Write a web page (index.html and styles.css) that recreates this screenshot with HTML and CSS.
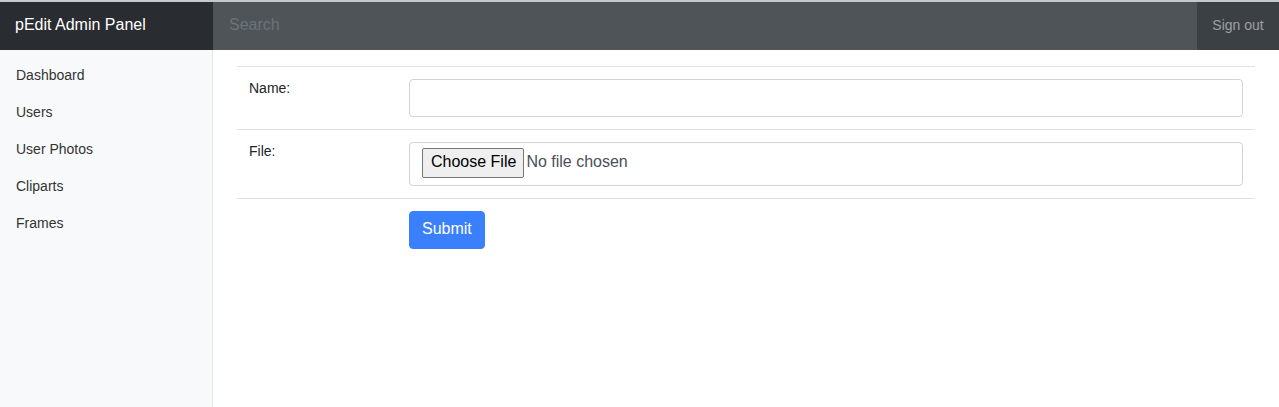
FILE: index.html
```html
<!DOCTYPE html>
<html>
<head>
<meta charset="utf-8">
<title>pEdit Admin Panel</title>
<link rel="stylesheet" href="styles.css">
</head>
<body>
<div class="topline"></div>
<nav class="navbar">
  <a class="brand" href="#">pEdit Admin Panel</a>
  <input class="search" type="text" placeholder="Search">
  <a class="signout" href="#">Sign out</a>
</nav>
<div class="layout">
  <aside class="sidebar">
    <ul class="nav">
      <li><a href="#">Dashboard</a></li>
      <li><a href="#">Users</a></li>
      <li><a href="#">User Photos</a></li>
      <li><a href="#">Cliparts</a></li>
      <li><a href="#">Frames</a></li>
    </ul>
  </aside>
  <main class="main">
    <form>
      <table class="table">
        <tr>
          <th class="label">Name:</th>
          <td><input class="form-control" type="text"></td>
        </tr>
        <tr>
          <th class="label">File:</th>
          <td><input class="form-control file" type="file"></td>
        </tr>
        <tr>
          <th class="label"></th>
          <td><button class="btn" type="submit">Submit</button></td>
        </tr>
      </table>
    </form>
  </main>
</div>
</body>
</html>
```
FILE: styles.css
```css
* { box-sizing: border-box; }
html, body { margin: 0; padding: 0; }
body {
  font-family: "Liberation Sans", Arial, sans-serif;
  font-size: 14px;
  line-height: 1.5;
  color: #212529;
  background: #fff;
  height: 407px;
  overflow: hidden;
}
.topline { height: 2px; background: #c8c8c8; }
.navbar {
  display: flex;
  height: 48px;
  background: #343a40;
}
.brand {
  width: 213px;
  flex: none;
  display: flex;
  align-items: center;
  padding-left: 15px;
  padding-bottom: 2px;
  background: #292c30;
  color: #fff;
  font-size: 16px;
  text-decoration: none;
}
.search {
  flex: 1;
  border: 0;
  background: #4f5458;
  color: #fff;
  font-family: inherit;
  font-size: 16px;
  padding: 0 16px 2px;
  outline: none;
}
.search::placeholder { color: #6c737a; }
.signout {
  flex: none;
  width: 82px;
  display: flex;
  align-items: center;
  justify-content: center;
  padding-bottom: 1px;
  background: #3b4045;
  color: rgba(255,255,255,.5);
  font-size: 14px;
  text-decoration: none;
}
.layout { display: flex; height: 357px; }
.sidebar {
  width: 213px;
  flex: none;
  background: #f8f9fa;
  border-right: 1px solid #e4e5e6;
  padding-top: 7px;
}
.nav { list-style: none; margin: 0; padding: 0; }
.nav a {
  display: block;
  padding: 8px 16px;
  color: #333;
  text-decoration: none;
  line-height: 21px;
}
.main { flex: 1; padding: 16px 24px 0; }
.table { width: 100%; border-collapse: collapse; }
.table th, .table td {
  border-top: 1px solid #dee2e6;
  padding: 12px;
  vertical-align: top;
  text-align: left;
}
.table th {
  width: 160px;
  padding-top: 11px;
  font-weight: normal;
  color: #212529;
}
.form-control {
  display: block;
  width: 100%;
  height: 38px;
  padding: 6px 12px;
  font-family: inherit;
  font-size: 16px;
  line-height: 1.5;
  color: #495057;
  background: #fff;
  border: 1px solid #ced4da;
  border-radius: 4px;
}
.form-control.file { height: 44px; padding: 5px 12px 7px; }
.form-control.file::file-selector-button {
  font-family: inherit;
  font-size: 16px;
  color: #000;
  background: #efefef;
  border: 1px solid #767676;
  border-radius: 2px;
  padding: 1px 7px 3px 8px;
  margin-right: 2px;
  height: 30px;
}
.btn {
  font-family: inherit;
  font-size: 16px;
  line-height: 1.5;
  padding: 5px 12px 7px;
  color: #fff;
  background: #3a7ffb;
  border: 1px solid #3a7ffb;
  border-radius: 4px;
}
```
